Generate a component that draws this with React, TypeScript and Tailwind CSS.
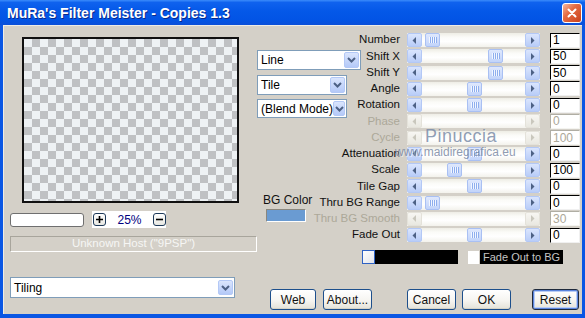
import React from "react";

const FONT = "font-['Liberation_Sans',Arial,sans-serif]";

type Row = { label: string; value: string; thumb?: number; disabled?: boolean };

const rows: Row[] = [
  { label: "Number", value: "1", thumb: 18 },
  { label: "Shift X", value: "50", thumb: 81 },
  { label: "Shift Y", value: "50", thumb: 81 },
  { label: "Angle", value: "0", thumb: 60 },
  { label: "Rotation", value: "0", thumb: 60 },
  { label: "Phase", value: "0", disabled: true },
  { label: "Cycle", value: "100", disabled: true },
  { label: "Attenuation", value: "0", thumb: 60 },
  { label: "Scale", value: "100", thumb: 40 },
  { label: "Tile Gap", value: "0", thumb: 60 },
  { label: "Thru BG Range", value: "0", thumb: 18 },
  { label: "Thru BG Smooth", value: "30", disabled: true },
  { label: "Fade Out", value: "0", thumb: 60 },
];

function Arrow({ dir, disabled }: { dir: "l" | "r"; disabled?: boolean }) {
  return (
    <div
      className={
        disabled
          ? "w-[15px] h-[14px] rounded-[2px] flex items-center justify-center border border-[#e4e2da] bg-[linear-gradient(to_bottom,#f7f6f2,#e9e8e1)]"
          : "w-[15px] h-[14px] rounded-[2px] flex items-center justify-center border border-[#b3c8f6] bg-[linear-gradient(to_bottom,#dae5fd,#b9cdf8)]"
      }
    >
      <svg width="5" height="7" viewBox="0 0 5 7">
        <path
          d={dir === "l" ? "M4 0 L0.5 3.5 L4 7 Z" : "M1 0 L4.5 3.5 L1 7 Z"}
          fill={disabled ? "#c9c7bd" : "#4d6185"}
        />
      </svg>
    </div>
  );
}

function Thumb({ left }: { left: number }) {
  return (
    <div
      className="absolute top-0 h-[14px] w-[15px] rounded-[2px] border border-[#a9c0f3] bg-[linear-gradient(to_bottom,#dfe8fd,#c2d4fa)] flex items-center justify-center gap-[1px]"
      style={{ left }}
    >
      {[0, 1, 2, 3].map((i) => (
        <div key={i} className="w-[1px] h-[6px] bg-[#f2f6ff] shadow-[1px_0_0_#8eaeee]" />
      ))}
    </div>
  );
}

function Chevron() {
  return (
    <svg width="9" height="6" viewBox="0 0 9 6">
      <path d="M1 1 L4.5 4.5 L8 1" stroke="#4d6185" strokeWidth="2" fill="none" />
    </svg>
  );
}

function ComboArrow({ h }: { h: string }) {
  return (
    <div
      className={`${h} w-[15px] rounded-[2px] border border-[#b3c8f6] bg-[linear-gradient(to_bottom,#dae5fd,#b4c9f8)] flex items-center justify-center`}
    >
      <Chevron />
    </div>
  );
}

function SliderRow({ r }: { r: Row }) {
  return (
    <div className="flex items-center h-[16.25px]">
      <div
        className={`w-[80px] flex justify-end whitespace-nowrap text-[11.5px] leading-none ${
          r.disabled ? "text-[#aca899]" : "text-[#111]"
        }`}
      >
        <span>{r.label}</span>
      </div>
      <div className="relative ml-[7px] w-[133px] h-[14px] flex justify-between bg-[linear-gradient(to_bottom,#eeede5,#fbfbf8_30%,#ffffff_60%,#f3f2ec)]">
        <Arrow dir="l" disabled={r.disabled} />
        {r.thumb !== undefined && <Thumb left={r.thumb} />}
        <Arrow dir="r" disabled={r.disabled} />
      </div>
      <div
        className={`ml-[10px] w-[30px] h-[15px] bg-white flex items-center pl-[2px] text-[12px] leading-none border ${
          r.disabled
            ? "border-[#b0aea4] border-r-[#f4f4f0] border-b-[#f4f4f0] text-[#aca899]"
            : "border-black border-r-[#f0f0f0] border-b-[#f0f0f0] text-black"
        }`}
      >
        {r.value}
      </div>
    </div>
  );
}

function Btn({ label, cls, def }: { label: string; cls: string; def?: boolean }) {
  return (
    <div
      className={`${cls} h-[21px] rounded-[3px] border flex items-center justify-center text-[12px] text-[#111] bg-[linear-gradient(to_bottom,#ffffff,#f6f5f1_55%,#e4e2d8)] ${
        def
          ? "border-[#1f2a3c] shadow-[inset_0_0_0_1px_#5a84dd,inset_0_0_0_2px_#b9cdf4]"
          : "border-[#1d4f8c] shadow-[inset_0_-1px_0_#d6d3c6]"
      }`}
    >
      {label}
    </div>
  );
}

export default function App() {
  return (
    <div className={`${FONT} w-[585px] h-[318px] flex flex-col bg-[#0a56e4] overflow-hidden`}>
      {/* Title bar */}
      <div className="h-[25px] shrink-0 flex items-center justify-between pl-[7px] pr-[3px] bg-[linear-gradient(to_bottom,#3b8cfb_0%,#0f62ee_10%,#0458e8_45%,#0254e5_80%,#0a4fd8_100%)]">
        <span className="text-white font-bold text-[14px] leading-none [text-shadow:1px_1px_0_#0a2a8a]">
          MuRa's Filter Meister - Copies 1.3
        </span>
        <div className="w-[20px] h-[20px] rounded-[3px] border border-white bg-[linear-gradient(135deg,#f4b8a0,#e46b43_40%,#c9401b)] flex items-center justify-center">
          <svg width="10" height="10" viewBox="0 0 10 10">
            <path d="M1.5 1.5 L8.5 8.5 M8.5 1.5 L1.5 8.5" stroke="white" strokeWidth="2" strokeLinecap="round" />
          </svg>
        </div>
      </div>

      {/* Frame */}
      <div className="flex-1 px-[3px] pb-[4px]">
        <div className="relative h-full bg-[#d4d0c8] shadow-[inset_1px_1px_0_#eeece6] flex pl-[7px] text-black">
          {/* Left column */}
          <div className="w-[247px] shrink-0 flex flex-col">
            <div className="ml-[12px] mt-[12px] w-[217px] h-[166px] border-2 border-[#111] bg-[conic-gradient(#bfc1c3_25%,#eef2f4_0_50%,#bfc1c3_0_75%,#eef2f4_0)] bg-[length:16px_16px]" />
            <div className="mt-[8px] h-[17px] flex items-center">
              <div className="w-[74px] h-[14px] rounded-[3px] border border-[#6f6f6f] bg-white" />
              <div className="ml-[8px] w-[74px] h-[17px] bg-white flex items-center justify-between">
                <div className="ml-[1px] w-[13px] h-[13px] rounded-[3px] border border-[#1e3a5a] bg-[linear-gradient(to_bottom,#ffffff,#e8e8e2)] flex items-center justify-center">
                  <svg width="7" height="7" viewBox="0 0 7 7">
                    <path d="M3.5 0 V7 M0 3.5 H7" stroke="black" strokeWidth="1.6" />
                  </svg>
                </div>
                <span className="text-[12px] leading-none text-[#000080]">25%</span>
                <div className="w-[13px] h-[13px] rounded-[3px] border border-[#1e3a5a] bg-[linear-gradient(to_bottom,#ffffff,#e8e8e2)] flex items-center justify-center">
                  <svg width="7" height="7" viewBox="0 0 7 7">
                    <path d="M0 3.5 H7" stroke="black" strokeWidth="1.6" />
                  </svg>
                </div>
              </div>
            </div>
            <div className="mt-[8px] w-[247px] h-[16px] border border-[#a8a59c] border-r-white border-b-white flex items-center justify-center text-[11.5px] leading-none text-[#f6f6f4]">
              Unknown Host ("9PSP")
            </div>
            <div className="mt-[25px] w-[225px] h-[21px] border border-[#7f9db9] bg-white flex items-center justify-between pl-[3px] pr-[1px]">
              <span className="text-[12px] leading-none">Tiling</span>
              <ComboArrow h="h-[15px]" />
            </div>
          </div>

          {/* Right part */}
          <div className="flex-1 flex flex-col">
            <div className="flex">
              {/* Middle column */}
              <div className="w-[63px] shrink-0 flex flex-col">
                <div className="mt-[25px] w-[104px] h-[20px] border border-[#7f9db9] bg-white flex items-center justify-between pl-[3px] pr-[1px]">
                  <span className="text-[12px] leading-none">Line</span>
                  <ComboArrow h="h-[16px]" />
                </div>
                <div className="mt-[5px] w-[90px] h-[20px] border border-[#7f9db9] bg-white flex items-center justify-between pl-[3px] pr-[1px]">
                  <span className="text-[12px] leading-none">Tile</span>
                  <ComboArrow h="h-[16px]" />
                </div>
                <div className="mt-[4px] w-[90px] h-[19px] border border-[#7f9db9] bg-white flex items-center justify-between pl-[3px] pr-[1px]">
                  <span className="text-[12px] leading-none whitespace-nowrap">(Blend Mode)</span>
                  <ComboArrow h="h-[15px]" />
                </div>
                <div className="mt-[76px] ml-[6px] h-[13px] text-[12px] leading-[13px] whitespace-nowrap text-[#111]">BG Color</div>
                <div className="mt-[2px] ml-[9px] w-[40px] h-[13px] bg-[#6a9bd2] border border-[#8a877e] border-r-white border-b-white" />
              </div>

              {/* Right column */}
              <div className="flex-1 flex flex-col">
                <div className="mt-[7px] flex flex-col">
                  {rows.map((r) => (
                    <SliderRow key={r.label} r={r} />
                  ))}
                </div>
                <div className="mt-[7px] ml-[42px] h-[14px] flex items-stretch">
                  <div className="w-[13px] border border-[#2f62c4] bg-[linear-gradient(135deg,#ffffff,#e2e4ea)]" />
                  <div className="w-[83px] bg-black" />
                  <div className="ml-[10px] mt-[1px] w-[11px] h-[13px] bg-white" />
                  <div className="ml-[1px] w-[83px] bg-black flex items-center pl-[3px] text-[11px] leading-none text-[#c4c4c4] whitespace-nowrap">
                    Fade Out to BG
                  </div>
                </div>
              </div>
            </div>

            {/* Buttons */}
            <div className="mt-[25px] flex">
              <Btn label="Web" cls="ml-[13px] w-[46px]" />
              <Btn label="About..." cls="ml-[7px] w-[49px]" />
              <Btn label="Cancel" cls="ml-[35px] w-[49px]" />
              <Btn label="OK" cls="ml-[6px] w-[49px]" />
              <Btn label="Reset" cls="ml-[21px] w-[47px]" def />
            </div>
          </div>

          {/* Watermark overlay */}
          <div className="absolute left-[422px] top-[102px] text-[18px] leading-none tracking-[0.5px] text-[#7385a3]/80 [text-shadow:1px_1px_0_rgba(255,255,255,0.6)] pointer-events-none">
            Pinuccia
          </div>
          <div className="absolute left-[392px] top-[121px] text-[12px] leading-none text-[#72819e]/80 [text-shadow:1px_1px_0_rgba(255,255,255,0.5)] pointer-events-none whitespace-nowrap">
            www.maidiregrafica.eu
          </div>
        </div>
      </div>
    </div>
  );
}
